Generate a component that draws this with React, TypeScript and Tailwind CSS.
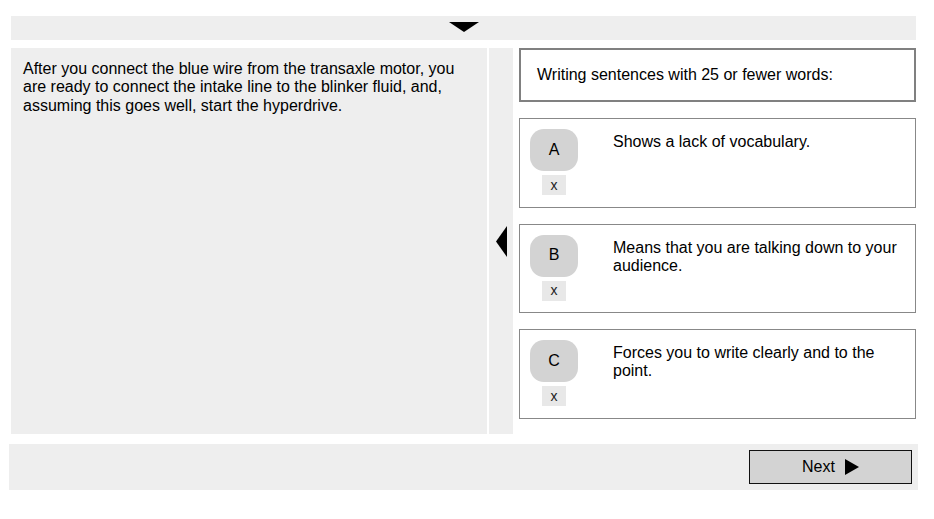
import React from "react";

const options = [
  { letter: "A", text: "Shows a lack of vocabulary." },
  { letter: "B", text: "Means that you are talking down to your audience." },
  { letter: "C", text: "Forces you to write clearly and to the point." },
];

export default function App() {
  return (
    <div className="w-[934px] h-[519px] bg-white text-[16px] leading-[18.4px] text-black font-['Liberation_Sans',Arial,sans-serif]">
      <div className="pt-4 pl-[11px] pr-[18px]">
        <div className="h-6 bg-[#eeeeee] flex justify-center items-start pt-[6px]">
          <svg width="30" height="10" viewBox="0 0 30 10">
            <polygon points="0,0 30,0 15,10" fill="#000" />
          </svg>
        </div>
        <div className="mt-2 flex h-[386px]">
          <div className="w-[476px] bg-[#eeeeee] px-3 pt-3">
            After you connect the blue wire from the transaxle motor, you are ready to connect the intake line to the blinker fluid, and, assuming this goes well, start the hyperdrive.
          </div>
          <div className="ml-[2px] w-6 bg-[#eeeeee] flex items-center justify-center">
            <svg width="11" height="31" viewBox="0 0 11 31">
              <polygon points="11,0 11,31 0,15.5" fill="#000" />
            </svg>
          </div>
          <div className="ml-[6px] w-[397px] flex flex-col gap-4">
            <div className="h-[54px] border-2 border-[#808080] px-4 flex items-center">
              Writing sentences with 25 or fewer words:
            </div>
            {options.map((o) => (
              <div key={o.letter} className="h-[89.5px] border border-[#888888] flex pl-[10px] pt-[10px] pr-[10px]">
                <div className="w-12 flex flex-col items-center">
                  <div className="w-12 h-[42px] rounded-[14px] bg-[#d3d3d3] flex items-center justify-center">
                    {o.letter}
                  </div>
                  <div className="mt-1 w-6 h-5 bg-[#e8e8e8] flex items-center justify-center text-[14px] text-[#222]">
                    x
                  </div>
                </div>
                <div className="ml-[35px] pt-[4px]">{o.text}</div>
              </div>
            ))}
          </div>
        </div>
        <div className="mt-[10px] -mx-[2px] h-[46px] bg-[#eeeeee] flex justify-end items-start pt-[6px] pr-[6px]">
          <div className="w-[163px] h-[34px] border border-[#111] bg-[#d3d3d3] flex items-center justify-center gap-[10px]">
            <span>Next</span>
            <svg width="14" height="16" viewBox="0 0 14 16">
              <polygon points="0,0 14,8 0,16" fill="#000" />
            </svg>
          </div>
        </div>
      </div>
    </div>
  );
}
